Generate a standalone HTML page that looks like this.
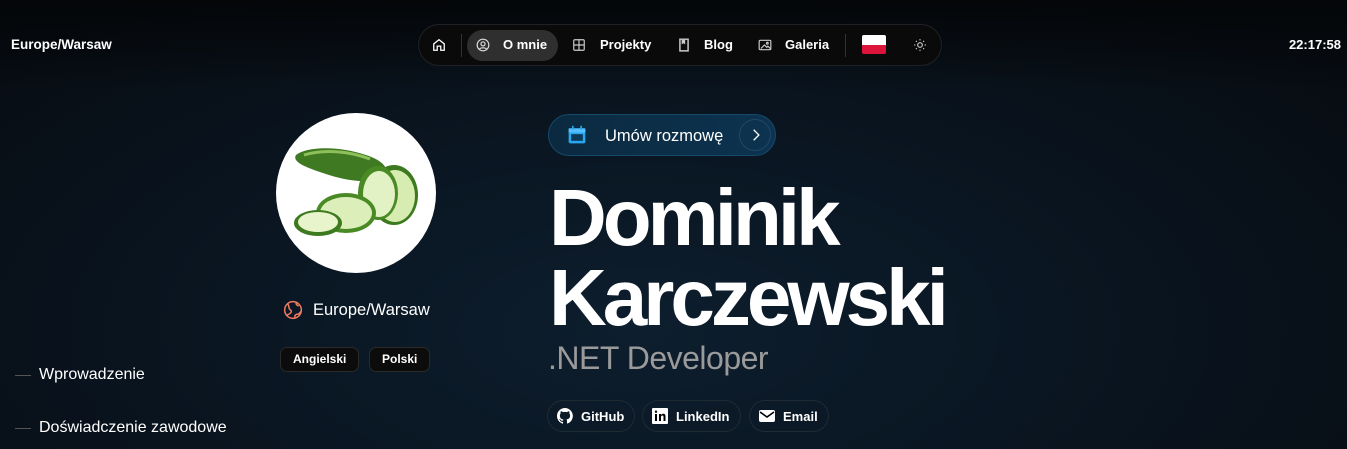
<!DOCTYPE html>
<html><head><meta charset="utf-8"><style>
*{margin:0;padding:0;box-sizing:border-box}
body{width:1347px;height:449px;overflow:hidden;font-family:"Liberation Sans",sans-serif;color:#fff;
background:radial-gradient(ellipse 900px 420px at 640px 330px,#0d1e2e 0%,#0a1622 45%,#070c12 100%);position:relative}
.top{position:absolute;left:0;top:0;width:100%;height:90px;background:linear-gradient(#040608,rgba(4,6,8,0))}
.abs{position:absolute}
.nav{left:418px;top:24px;width:524px;height:42px;border-radius:21px;background:#0a0a0a;border:1px solid #1e2226;display:flex;align-items:center;font-size:13px;font-weight:bold}
.pill{position:absolute;left:48px;top:5px;width:91px;height:31px;border-radius:16px;background:#2f2f2f}
.sep{position:absolute;top:9px;width:1px;height:23px;background:#333}
.tag{border:1px solid #2a2a2a;background:#0c0c0c;border-radius:7px;font-size:12px;font-weight:bold;height:25px;line-height:23px;padding:0 12px;position:absolute;top:347px}
.btn{position:absolute;top:400px;height:32px;border:1px solid #1f2a33;border-radius:16px;font-size:13px;font-weight:bold;display:flex;align-items:center;gap:8px;padding-left:9px}
.side{position:absolute;left:15px;font-size:16px;display:flex;align-items:center}
.side i{display:inline-block;width:16px;height:1px;background:#555;margin-right:8px}
</style></head><body>
<div class="top"></div>
<div class="abs" style="left:11px;top:37px;font-size:13.5px;font-weight:bold">Europe/Warsaw</div>
<div class="abs" style="right:6px;top:37px;font-size:13px;font-weight:bold">22:17:58</div>
<div class="abs nav">
 <div class="pill"></div>
 <div class="sep" style="left:42px"></div><div class="sep" style="left:426px"></div>
 <svg class="abs" style="left:13px;top:13px" width="14" height="14" viewBox="0 0 24 24" fill="none" stroke="#fff" stroke-width="2.2"><path d="M3 10l9-7 9 7v11h-6v-7H9v7H3z"/></svg>
 <svg class="abs" style="left:57px;top:13px" width="14" height="14" viewBox="0 0 24 24" fill="none" stroke="#ddd" stroke-width="2"><circle cx="12" cy="12" r="10"/><circle cx="12" cy="10" r="3.5"/><path d="M6 19c2-3 10-3 12 0"/></svg>
 <span class="abs" style="left:84px;top:12px">O mnie</span>
 <svg class="abs" style="left:153px;top:13px" width="14" height="14" viewBox="0 0 24 24" fill="none" stroke="#ccc" stroke-width="2"><rect x="3" y="3" width="18" height="18" rx="2"/><path d="M3 12h18M12 3v18"/></svg>
 <span class="abs" style="left:181px;top:12px">Projekty</span>
 <svg class="abs" style="left:258px;top:13px" width="14" height="14" viewBox="0 0 24 24" fill="#ccc"><path d="M5 2h14v20H5z" fill="none" stroke="#ccc" stroke-width="2.5"/><path d="M8 3h6v8l-3-2-3 2z"/></svg>
 <span class="abs" style="left:285px;top:12px">Blog</span>
 <svg class="abs" style="left:339px;top:13px" width="14" height="14" viewBox="0 0 24 24" fill="none" stroke="#ccc" stroke-width="2"><rect x="2" y="4" width="20" height="16" rx="2"/><path d="M5 18l6-6 4 4 2-2 4 4"/><circle cx="16" cy="9" r="1.5"/></svg>
 <span class="abs" style="left:366px;top:12px">Galeria</span>
 <div class="abs" style="left:443px;top:10px;width:24px;height:19px;border-radius:2px;overflow:hidden"><div style="height:50%;background:#fff"></div><div style="height:50%;background:#dc143c"></div></div>
 <svg class="abs" style="left:494px;top:13px" width="14" height="14" viewBox="0 0 24 24" fill="none" stroke="#ccc" stroke-width="2"><circle cx="12" cy="12" r="4"/><path d="M12 2v2M12 20v2M2 12h2M20 12h2M5 5l1.5 1.5M17.5 17.5L19 19M5 19l1.5-1.5M17.5 6.5L19 5"/></svg>
</div>

<div class="abs" style="left:276px;top:113px;width:160px;height:160px;border-radius:50%;background:#fff;overflow:hidden">
<svg width="160" height="160" viewBox="0 0 160 160">
 <path d="M20 42c10-8 40-10 70 0 18 6 24 14 18 22-6 6-30 6-55-2-18-6-38-12-33-20z" fill="#3f7a22"/>
 <path d="M28 42c20-6 45-4 66 4" stroke="#8fbf5a" stroke-width="3" fill="none"/>
 <ellipse cx="118" cy="82" rx="24" ry="30" fill="#3d7a1f"/><ellipse cx="119" cy="83" rx="20" ry="26" fill="#d6ecb0"/>
 <ellipse cx="102" cy="80" rx="20" ry="27" fill="#4a8a25"/><ellipse cx="103" cy="81" rx="16" ry="23" fill="#e3f2c4"/>
 <ellipse cx="70" cy="100" rx="30" ry="20" fill="#4a8a25"/><ellipse cx="70" cy="100" rx="26" ry="16" fill="#dcefbb"/>
 <ellipse cx="42" cy="110" rx="24" ry="13" fill="#3d7a1f"/><ellipse cx="42" cy="109" rx="20" ry="10" fill="#e8f5cc"/>
</svg></div>
<svg class="abs" style="left:283px;top:300px" width="20" height="20" viewBox="0 0 24 24" fill="none" stroke="#f07a62" stroke-width="1.8"><circle cx="12" cy="12" r="10"/><path d="M6 5c2 3 0 5 3 7s-1 5-4 6M14 21c0-3 2-4 4-4s2-3 4-3M16 3c-1 2 1 4 3 4"/></svg>
<div class="abs" style="left:313px;top:301px;font-size:16.5px">Europe/Warsaw</div>
<div class="tag" style="left:280px">Angielski</div>
<div class="tag" style="left:369px">Polski</div>

<div class="abs" style="left:548px;top:114px;width:228px;height:42px;border-radius:21px;background:linear-gradient(90deg,#0b2a40,#0d3350);border:1px solid #144a6a">
 <svg class="abs" style="left:18px;top:10px" width="20" height="20" viewBox="0 0 24 24"><rect x="2" y="4" width="20" height="18" rx="2" fill="#29a8f0"/><rect x="2" y="4" width="20" height="5" fill="#55c0ff"/><rect x="6" y="1" width="2" height="5" fill="#29a8f0"/><rect x="16" y="1" width="2" height="5" fill="#29a8f0"/><rect x="5" y="11" width="14" height="8" fill="#0b3a5a"/></svg>
 <span class="abs" style="left:56px;top:12px;font-size:16.5px">Umów rozmowę</span>
 <div class="abs" style="left:190px;top:4px;width:32px;height:32px;border-radius:50%;border:1px solid #1d4a66"><svg style="margin:8px 0 0 9px" width="14" height="14" viewBox="0 0 24 24" fill="none" stroke="#fff" stroke-width="2.2"><path d="M8 3l9 9-9 9"/></svg></div>
</div>
<div class="abs" style="left:549px;top:178px;font-size:80px;font-weight:bold;letter-spacing:-4px;line-height:80px">Dominik<br>Karczewski</div>
<div class="abs" style="left:548px;top:340px;font-size:32px;color:#9a9a9a;letter-spacing:-0.5px">.NET Developer</div>
<div class="btn" style="left:547px;width:88px"><svg width="16" height="16" viewBox="0 0 16 16" fill="#fff"><path d="M8 0a8 8 0 00-2.5 15.6c.4 0 .5-.2.5-.4v-1.4c-2.2.5-2.7-1-2.7-1-.4-.9-.9-1.2-.9-1.2-.7-.5.1-.5.1-.5.8.1 1.200.8 1.2.8.7 1.2 1.9.9 2.3.7.1-.5.3-.9.5-1.1-1.8-.2-3.6-.9-3.6-4 0-.9.3-1.6.8-2.100-.1-.2-.4-1 .1-2.1 0 0 .7-.2 2.2.8a7.5 7.5 0 014 0c1.5-1 2.2-.8 2.2-.8.4 1.1.2 1.9.1 2.1.5.6.8 1.3.8 2.1 0 3.1-1.9 3.7-3.6 3.9.3.3.5.8.5 1.5v2.2c0 .2.1.5.6.4A8 8 0 008 0z"/></svg>GitHub</div>
<div class="btn" style="left:642px;width:99px"><svg width="16" height="16" viewBox="0 0 16 16"><rect width="16" height="16" rx="1" fill="#fff"/><path d="M3 6h2v7H3zM4 2.5a1.2 1.2 0 110 2.4 1.2 1.2 0 010-2.4zM7 6h2v1c.4-.7 1.2-1.2 2.2-1.2 2 0 2.3 1.3 2.3 3V13h-2V9.3c0-.9 0-1.8-1.1-1.8S9 8.3 9 9.2V13H7z" fill="#000"/></svg>LinkedIn</div>
<div class="btn" style="left:749px;width:80px"><svg width="16" height="14" viewBox="0 0 16 14"><rect y="1" width="16" height="12" rx="2" fill="#fff"/><path d="M1 3l7 5 7-5" stroke="#000" stroke-width="1.6" fill="none"/></svg>Email</div>

<div class="side" style="top:366px"><i></i>Wprowadzenie</div>
<div class="side" style="top:419px"><i></i>Doświadczenie zawodowe</div>
</body></html>
